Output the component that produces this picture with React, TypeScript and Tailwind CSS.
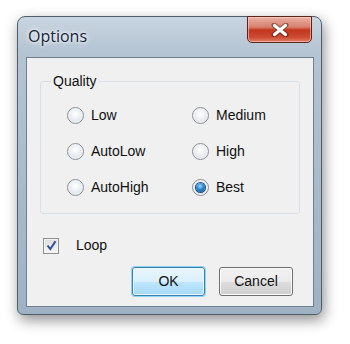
import React, { useState } from 'react';

const qualities = [
  ['Low', 'Medium'],
  ['AutoLow', 'High'],
  ['AutoHigh', 'Best'],
];

function Radio({ label, checked, onSelect }: { label: string; checked: boolean; onSelect: () => void }) {
  return (
    <button type="button" onClick={onSelect} className="flex items-center gap-[7px] h-[18px] text-left">
      <span className="w-[17px] h-[17px] rounded-full border border-[#8c8f94] bg-[radial-gradient(circle_at_50%_40%,#ffffff_0%,#e7ebf0_55%,#c9d1da_100%)] flex items-center justify-center shadow-[inset_0_0_0_1px_#f4f6f8]">
        {checked && (
          <span className="w-[9px] h-[9px] rounded-full bg-[radial-gradient(circle_at_45%_35%,#9fd8ff_0%,#2f86d0_45%,#0b3f7a_100%)] shadow-[0_0_0_1px_#1d4d86]" />
        )}
      </span>
      <span className="text-[14px] text-[#111]">{label}</span>
    </button>
  );
}

export default function App() {
  const [quality, setQuality] = useState('Best');
  const [loop, setLoop] = useState(true);

  return (
    <div className="w-[350px] h-[344px] bg-white pt-[16px] pl-[17px] font-['Liberation_Sans',Arial,sans-serif]">
      <div className="w-[305px] h-[299px] rounded-t-[8px] rounded-b-[6px] border border-[#4e5d6c] bg-[linear-gradient(180deg,#c9d5e0_0%,#b4c4d3_12%,#a8b9c9_60%,#9fb2c4_100%)] shadow-[2px_5px_14px_rgba(0,0,0,0.45)] flex flex-col">
        <div className="h-[40px] flex items-start justify-between pl-[10px] pr-[9px]">
          <span className="mt-[7px] text-[16px] text-[#15243a] [text-shadow:0_0_6px_#ffffff,0_0_3px_#ffffff] font-['Open_Sans',Arial,sans-serif]">
            Options
          </span>
          <button
            type="button"
            className="-mt-px w-[65px] h-[27px] rounded-b-[5px] border border-[#5b2219] bg-[linear-gradient(180deg,#eab1a4_0%,#d9816d_40%,#c2361f_52%,#cc4a31_80%,#e07d63_100%)] shadow-[inset_0_0_0_1px_rgba(255,220,210,0.55)] flex items-center justify-center"
          >
            <svg width="18" height="14" viewBox="0 0 18 14">
              <path d="M3 2 L15 12 M15 2 L3 12" stroke="#3a1410" strokeWidth="5" strokeLinecap="round" opacity="0.5" />
              <path d="M3.5 2.5 L14.5 11.5 M14.5 2.5 L3.5 11.5" stroke="#ffffff" strokeWidth="3.2" strokeLinecap="round" />
            </svg>
          </button>
        </div>

        <div className="mx-[8px] w-[288px] h-[250px] border border-[#6f7f8f] bg-[#f0f0f0] pt-[13px] px-[13px] flex flex-col">
          <fieldset className="w-[260px] h-[143px] border border-[#d5dfe5] rounded-[3px] pl-[10px] pr-0 pt-[14px]">
            <legend className="px-[2px] text-[14px] text-[#111]">Quality</legend>
            <div className="ml-[16px] grid grid-cols-[125px_1fr] gap-y-[18px]">
              {qualities.flat().map((q) => (
                <Radio key={q} label={q} checked={quality === q} onSelect={() => setQuality(q)} />
              ))}
            </div>
          </fieldset>

          <button type="button" onClick={() => setLoop(!loop)} className="mt-[21px] ml-[3px] flex items-center gap-[17px]">
            <span className="w-[16px] h-[16px] border border-[#8e8f8f] bg-[linear-gradient(180deg,#dcdcdc_0%,#f6f6f6_100%)] flex items-center justify-center shadow-[inset_0_0_0_1px_#f4f4f4]">
              {loop && (
                <svg width="11" height="11" viewBox="0 0 11 11">
                  <path d="M1.5 5.5 L4.3 9 L9.5 1.2" fill="none" stroke="#2f4f9e" strokeWidth="2" />
                </svg>
              )}
            </span>
            <span className="text-[14px] text-[#111]">Loop</span>
          </button>

          <div className="mt-[11px] flex justify-end gap-[14px] pr-[7px]">
            <button
              type="button"
              className="w-[73px] h-[29px] rounded-[3px] border border-[#3c7fb1] bg-[linear-gradient(180deg,#eaf6fd_0%,#d9f0fc_50%,#bee6fd_51%,#a7d9f5_100%)] shadow-[0_0_0_1px_#8fd3f5,inset_0_0_0_1px_#e8f7ff] text-[14px] text-[#111]"
            >
              OK
            </button>
            <button
              type="button"
              className="w-[74px] h-[29px] rounded-[3px] border border-[#707070] bg-[linear-gradient(180deg,#f2f2f2_0%,#ebebeb_50%,#dddddd_51%,#cfcfcf_100%)] shadow-[inset_0_0_0_1px_#fcfcfc] text-[14px] text-[#111]"
            >
              Cancel
            </button>
          </div>
        </div>
      </div>
    </div>
  );
}
